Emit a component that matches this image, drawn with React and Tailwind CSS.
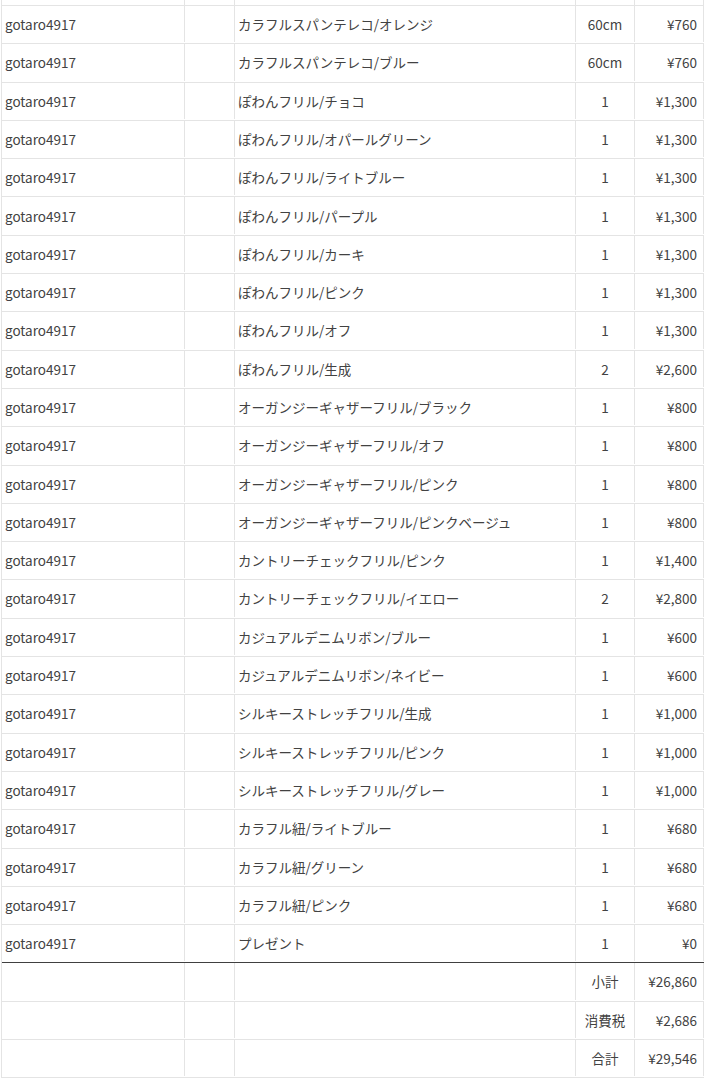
import React from "react";

const items = [
  ["カラフルスパンテレコ/オレンジ", "60cm", "¥760"],
  ["カラフルスパンテレコ/ブルー", "60cm", "¥760"],
  ["ぽわんフリル/チョコ", "1", "¥1,300"],
  ["ぽわんフリル/オパールグリーン", "1", "¥1,300"],
  ["ぽわんフリル/ライトブルー", "1", "¥1,300"],
  ["ぽわんフリル/パープル", "1", "¥1,300"],
  ["ぽわんフリル/カーキ", "1", "¥1,300"],
  ["ぽわんフリル/ピンク", "1", "¥1,300"],
  ["ぽわんフリル/オフ", "1", "¥1,300"],
  ["ぽわんフリル/生成", "2", "¥2,600"],
  ["オーガンジーギャザーフリル/ブラック", "1", "¥800"],
  ["オーガンジーギャザーフリル/オフ", "1", "¥800"],
  ["オーガンジーギャザーフリル/ピンク", "1", "¥800"],
  ["オーガンジーギャザーフリル/ピンクベージュ", "1", "¥800"],
  ["カントリーチェックフリル/ピンク", "1", "¥1,400"],
  ["カントリーチェックフリル/イエロー", "2", "¥2,800"],
  ["カジュアルデニムリボン/ブルー", "1", "¥600"],
  ["カジュアルデニムリボン/ネイビー", "1", "¥600"],
  ["シルキーストレッチフリル/生成", "1", "¥1,000"],
  ["シルキーストレッチフリル/ピンク", "1", "¥1,000"],
  ["シルキーストレッチフリル/グレー", "1", "¥1,000"],
  ["カラフル紐/ライトブルー", "1", "¥680"],
  ["カラフル紐/グリーン", "1", "¥680"],
  ["カラフル紐/ピンク", "1", "¥680"],
  ["プレゼント", "1", "¥0"],
];

const totals = [
  ["小計", "¥26,860"],
  ["消費税", "¥2,686"],
  ["合計", "¥29,546"],
];

// one spreadsheet row: user | blank | item | qty | price
const Row = ({ user, name, qty, price, last }) => (
  <div
    className={`flex h-[38.3px] pb-px border-b ${
      last ? "border-[#404040]" : "border-[#e4e4e4]"
    }`}
  >
    <div className="w-[183px] border-r border-[#e4e4e4] flex items-center pl-[3px]">
      {user}
    </div>
    <div className="w-[50px] border-r border-[#e4e4e4]" />
    <div className="w-[341px] border-r border-[#e4e4e4] flex items-center pl-[3px]">
      {name}
    </div>
    <div className="w-[59px] border-r border-[#e4e4e4] flex items-center justify-center">
      {qty}
    </div>
    <div className="w-[69px] border-r border-[#e4e4e4] flex items-center justify-end pr-[6px]">
      {price}
    </div>
  </div>
);

export default function App() {
  return (
    <div className="bg-white w-[705px] h-[1080px] overflow-hidden pl-px text-[13.5px] text-[#424242] font-['Noto_Sans_CJK_JP','Noto_Sans',sans-serif]">
      <div className="w-[703px] border-l border-[#e4e4e4]">
        {/* cut-off row at the top */}
        <div className="flex h-[6px] border-b border-[#e4e4e4]">
          <div className="w-[183px] border-r border-[#e4e4e4]" />
          <div className="w-[50px] border-r border-[#e4e4e4]" />
          <div className="w-[341px] border-r border-[#e4e4e4]" />
          <div className="w-[59px] border-r border-[#e4e4e4]" />
          <div className="w-[69px] border-r border-[#e4e4e4]" />
        </div>

        {items.map(([name, qty, price], i) => (
          <Row
            key={i}
            user="gotaro4917"
            name={name}
            qty={qty}
            price={price}
            last={i === items.length - 1}
          />
        ))}

        {totals.map(([label, value]) => (
          <Row key={label} user="" name="" qty={label} price={value} />
        ))}
      </div>
    </div>
  );
}
